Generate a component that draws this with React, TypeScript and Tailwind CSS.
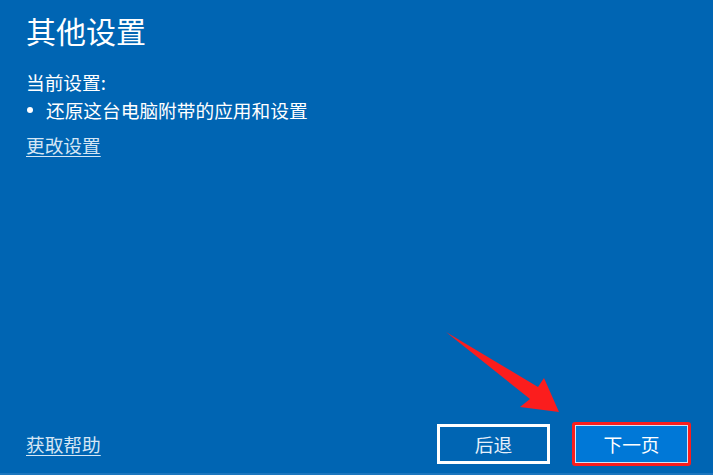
import React from 'react';

const cjk = { fontFamily: '"Noto Sans CJK SC", "Microsoft YaHei", sans-serif' };

function PointerArrow() {
  return (
    <svg
      className="absolute left-0 top-0 pointer-events-none"
      width={713}
      height={475}
      viewBox="0 0 713 475"
    >
      <polygon points="446,332 538,387 544,378 559,412 520,407 530,399" fill="#fb1d1d" />
    </svg>
  );
}

export default function App() {
  return (
    <div
      className="relative w-[713px] h-[475px] overflow-hidden bg-[#0065b3] text-white flex flex-col"
      style={cjk}
    >
      {/* Content */}
      <div className="pl-[26px]">
        <h1 className="mt-[10px] text-[30px] leading-[40px] font-normal">其他设置</h1>
        <p className="mt-[18px] text-[18.7px] leading-[28px]">当前设置:</p>
        <ul className="text-[18.7px] leading-[28px]">
          <li className="flex items-center">
            <span className="ml-[1px] mr-[13px] w-[6px] h-[6px] rounded-full bg-white" />
            <span>还原这台电脑附带的应用和设置</span>
          </li>
        </ul>
        <a
          href="#"
          className="mt-[7px] inline-block text-[18.7px] leading-[28px] text-[#d5e6f5] underline underline-offset-[3px] decoration-1"
        >
          更改设置
        </a>
      </div>

      {/* Footer */}
      <div className="mt-auto flex items-center justify-between pl-[26px] pr-[22px] pb-[7px]">
        <a
          href="#"
          className="text-[18.7px] leading-[28px] text-[#d5e6f5] underline underline-offset-[3px] decoration-1"
        >
          获取帮助
        </a>
        <div className="flex items-center gap-[22px]">
          <button className="w-[113px] h-[40px] border-[3px] border-white text-[18.7px] text-[#e6f0fa] flex items-center justify-center">
            后退
          </button>
          <button className="w-[119px] h-[44px] border-[3px] border-[#fb1d1d] rounded-[3px] p-0">
            <span className="w-full h-full flex items-center justify-center bg-[#0078d7] border border-[#cfe3f6] text-[18.7px] text-white">
              下一页
            </span>
          </button>
        </div>
      </div>
      <div className="h-[2px] bg-[#1a75bd]" />

      <PointerArrow />
    </div>
  );
}
